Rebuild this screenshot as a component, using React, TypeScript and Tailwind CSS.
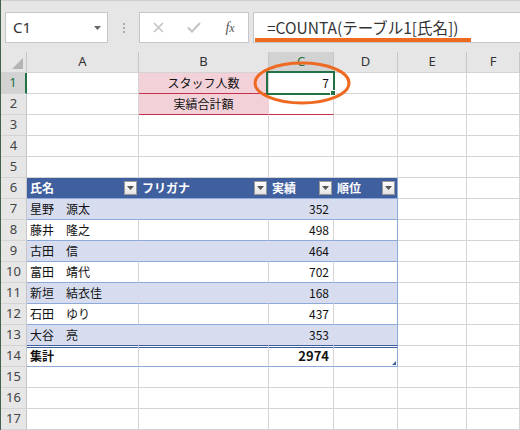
import React from "react";

const jp = { fontFamily: '"Noto Sans CJK JP", "Noto Sans", sans-serif' };
const ui = { fontFamily: '"Noto Sans", "Liberation Sans", sans-serif' };

const people: [string, number][] = [
    ["星野　源太", 352],
    ["藤井　隆之", 498],
    ["古田　信", 464],
    ["富田　靖代", 702],
    ["新垣　結衣佳", 168],
    ["石田　ゆり", 437],
    ["大谷　亮", 353],
];

const FilterBtn: React.FC = () => (
    <div className="ml-auto mr-[2px] w-[13px] h-[14px] shrink-0 border border-[#9a9a9a] bg-gradient-to-b from-white to-[#e2e2e2] flex items-center justify-center">
        <svg width="7" height="4" viewBox="0 0 7 4"><path d="M0 0h7L3.5 4z" fill="#555"/></svg>
    </div>
)

const RowHead: React.FC<{ n: number; sel?: boolean }> = ({n, sel}) => (
    <div style={ui}
         className={sel
             ? "flex items-center justify-center bg-[#d2d2d2] text-[#217346] text-[13px] border-b border-[#d4d4d4] border-r-2 border-r-[#217346]"
             : "flex items-center justify-center bg-[#e6e6e6] text-[#444] text-[13px] border-b border-[#d4d4d4] border-r border-r-[#c6c6c6]"}>
        {n}
    </div>
)

const cell = "border-r border-b border-[#d4d4d4] flex items-center px-[3px] text-[12px] text-[#111] whitespace-nowrap overflow-hidden"

const EmptyCells: React.FC = () => (
    <>
        <div className={cell}/>
        <div className={cell}/>
        <div className={cell}/>
        <div className={cell}/>
        <div className={cell}/>
        <div className={cell}/>
    </>
)

export default function App() {
    const colHead = "flex items-center justify-center bg-[#e6e6e6] text-[#333] text-[13px] border-r border-[#c6c6c6] border-b border-b-[#d4d4d4]"

    return (
        <div className="relative w-[520px] h-[430px] overflow-hidden bg-white border-l border-[#44614d]" style={jp}>
            {/* formula bar */}
            <div className="h-[52px] bg-[#e6e6e6] border-t border-[#cfcfcf] flex items-start pt-[11px] pl-[4px]">
                <div className="w-[103px] h-[31px] bg-white border border-[#c6c6c6] flex items-center pl-[7px] pr-[6px]">
                    <span style={ui} className="text-[15px] text-[#333]">C1</span>
                    <svg className="ml-auto" width="7" height="4" viewBox="0 0 7 4"><path d="M0 0h7L3.5 4z" fill="#666"/></svg>
                </div>
                <div className="w-[31px] h-[31px] flex flex-col items-center justify-center gap-[2px]">
                    <div className="w-[2px] h-[2px] bg-[#aaa]"/>
                    <div className="w-[2px] h-[2px] bg-[#aaa]"/>
                    <div className="w-[2px] h-[2px] bg-[#aaa]"/>
                </div>
                <div className="w-[110px] h-[31px] bg-white border border-[#c6c6c6] flex items-center">
                    <div className="w-[36px] flex justify-center">
                        <svg width="11" height="11" viewBox="0 0 11 11"><path d="M1 1l9 9M10 1l-9 9" stroke="#c4c4c4" strokeWidth="1.6"/></svg>
                    </div>
                    <div className="w-[36px] flex justify-center">
                        <svg width="14" height="11" viewBox="0 0 14 11"><path d="M1 5.5l4 4 8-8.5" stroke="#c4c4c4" strokeWidth="2" fill="none"/></svg>
                    </div>
                    <div className="w-[36px] flex justify-center">
                        <span className="italic text-[14px] text-[#555]" style={{fontFamily: '"Liberation Serif", serif'}}>f<span className="text-[12px]">x</span></span>
                    </div>
                </div>
                <div className="relative ml-[4px] flex-1 h-[31px] bg-white border border-[#c6c6c6] border-r-0 flex items-center pl-[13px]">
                    <span className="text-[15.5px] text-[#333]">=COUNTA(テーブル1[氏名])</span>
                    <div className="absolute left-[1px] top-[25px] w-[216px] h-[4px] bg-[#ee6a22]"/>
                </div>
            </div>

            {/* sheet */}
            <div className="grid grid-cols-[26px_112px_130px_65px_64px_69px_53px] auto-rows-[21px]">
                <div className="bg-[#e6e6e6] border-r border-[#c6c6c6] border-b border-b-[#d4d4d4] flex items-end justify-end pr-[3px] pb-[3px]">
                    <svg width="11" height="11" viewBox="0 0 11 11"><path d="M11 0v11H0z" fill="#b4b4b4"/></svg>
                </div>
                <div style={ui} className={colHead}>A</div>
                <div style={ui} className={colHead}>B</div>
                <div style={ui} className="flex items-center justify-center bg-[#d2d2d2] text-[#217346] text-[13px] border-r border-[#c6c6c6] border-b-2 border-b-[#217346]">C</div>
                <div style={ui} className={colHead}>D</div>
                <div style={ui} className={colHead}>E</div>
                <div style={ui} className={colHead}>F</div>

                {/* 1 */}
                <RowHead n={1} sel/>
                <div className={cell}/>
                <div className={cell + " justify-center bg-[#f3d1d9] border-b-[#c2304c]"}>スタッフ人数</div>
                <div className={cell + " relative justify-end pr-[4px] overflow-visible"}>
                    7
                    <div className="absolute z-10 -left-[3px] -top-[2px] w-[69px] h-[24px] border-2 border-[#217346]"/>
                    <div className="absolute z-10 right-[-3px] bottom-[-3px] w-[6px] h-[6px] bg-[#217346] border border-white"/>
                </div>
                <div className={cell}/>
                <div className={cell}/>
                <div className={cell}/>

                {/* 2 */}
                <RowHead n={2}/>
                <div className={cell}/>
                <div className={cell + " justify-center bg-[#f3d1d9] border-r-[#f3d1d9] border-b-[#c2304c]"}>実績合計額</div>
                <div className={cell + " border-b-[#c2304c]"}/>
                <div className={cell}/>
                <div className={cell}/>
                <div className={cell}/>

                {[3, 4, 5].map(n => (
                    <React.Fragment key={n}>
                        <RowHead n={n}/>
                        <EmptyCells/>
                    </React.Fragment>
                ))}

                {/* 6 table header */}
                <RowHead n={6}/>
                <div className="bg-[#3f5f9e] flex items-center pl-[3px] text-[12px] font-bold text-white border-b border-[#8faad9]">氏名<FilterBtn/></div>
                <div className="bg-[#3f5f9e] flex items-center pl-[3px] text-[12px] font-bold text-white border-b border-[#8faad9]">フリガナ<FilterBtn/></div>
                <div className="bg-[#3f5f9e] flex items-center pl-[3px] text-[12px] font-bold text-white border-b border-[#8faad9]">実績<FilterBtn/></div>
                <div className="bg-[#3f5f9e] flex items-center pl-[3px] text-[12px] font-bold text-white border-b border-r border-[#8faad9]">順位<FilterBtn/></div>
                <div className={cell}/>
                <div className={cell}/>

                {people.map(([name, score], i) => {
                    const band = i % 2 === 0
                    const last = i === people.length - 1
                    const b = band ? "bg-[#d7ddef] border-r-[#d7ddef]" : "bg-white border-r-[#d4d4d4]"
                    const bb = last ? "border-b-[#3f5f9e]" : "border-b-[#8faad9]"
                    return (
                        <React.Fragment key={name}>
                            <RowHead n={7 + i}/>
                            <div className={cell + " " + b + " " + bb}>{name}</div>
                            <div className={cell + " " + b + " " + bb}/>
                            <div className={cell + " justify-end pr-[4px] " + b + " " + bb}>{score}</div>
                            <div className={cell + " " + (band ? "bg-[#d7ddef]" : "bg-white") + " border-r-[#8faad9] " + bb}/>
                            <div className={cell}/>
                            <div className={cell}/>
                        </React.Fragment>
                    )
                })}

                {/* 14 total */}
                <RowHead n={14}/>
                <div className={cell + " font-bold border-b-[#8faad9] shadow-[inset_0_1px_0_#fff,inset_0_2px_0_#3f5f9e]"}>集計</div>
                <div className={cell + " border-b-[#8faad9] shadow-[inset_0_1px_0_#fff,inset_0_2px_0_#3f5f9e]"}/>
                <div className={cell + " justify-end pr-[4px] font-bold text-[13px] border-b-[#8faad9] shadow-[inset_0_1px_0_#fff,inset_0_2px_0_#3f5f9e]"}>2974</div>
                <div className={cell + " relative border-r-[#8faad9] border-b-[#8faad9] shadow-[inset_0_1px_0_#fff,inset_0_2px_0_#3f5f9e]"}>
                    <svg className="absolute right-[1px] bottom-[1px]" width="4" height="4" viewBox="0 0 4 4"><path d="M4 0v4H0z" fill="#3f5f9e"/></svg>
                </div>
                <div className={cell}/>
                <div className={cell}/>

                {[15, 16, 17].map(n => (
                    <React.Fragment key={n}>
                        <RowHead n={n}/>
                        <EmptyCells/>
                    </React.Fragment>
                ))}
            </div>

            {/* highlight ellipse */}
            <svg className="absolute z-20 left-[252px] top-[61px] pointer-events-none" width="98" height="45" viewBox="0 0 98 45">
                <ellipse cx="49" cy="22" rx="47" ry="20" fill="none" stroke="#ee6a22" strokeWidth="3"/>
            </svg>
        </div>
    )
}
